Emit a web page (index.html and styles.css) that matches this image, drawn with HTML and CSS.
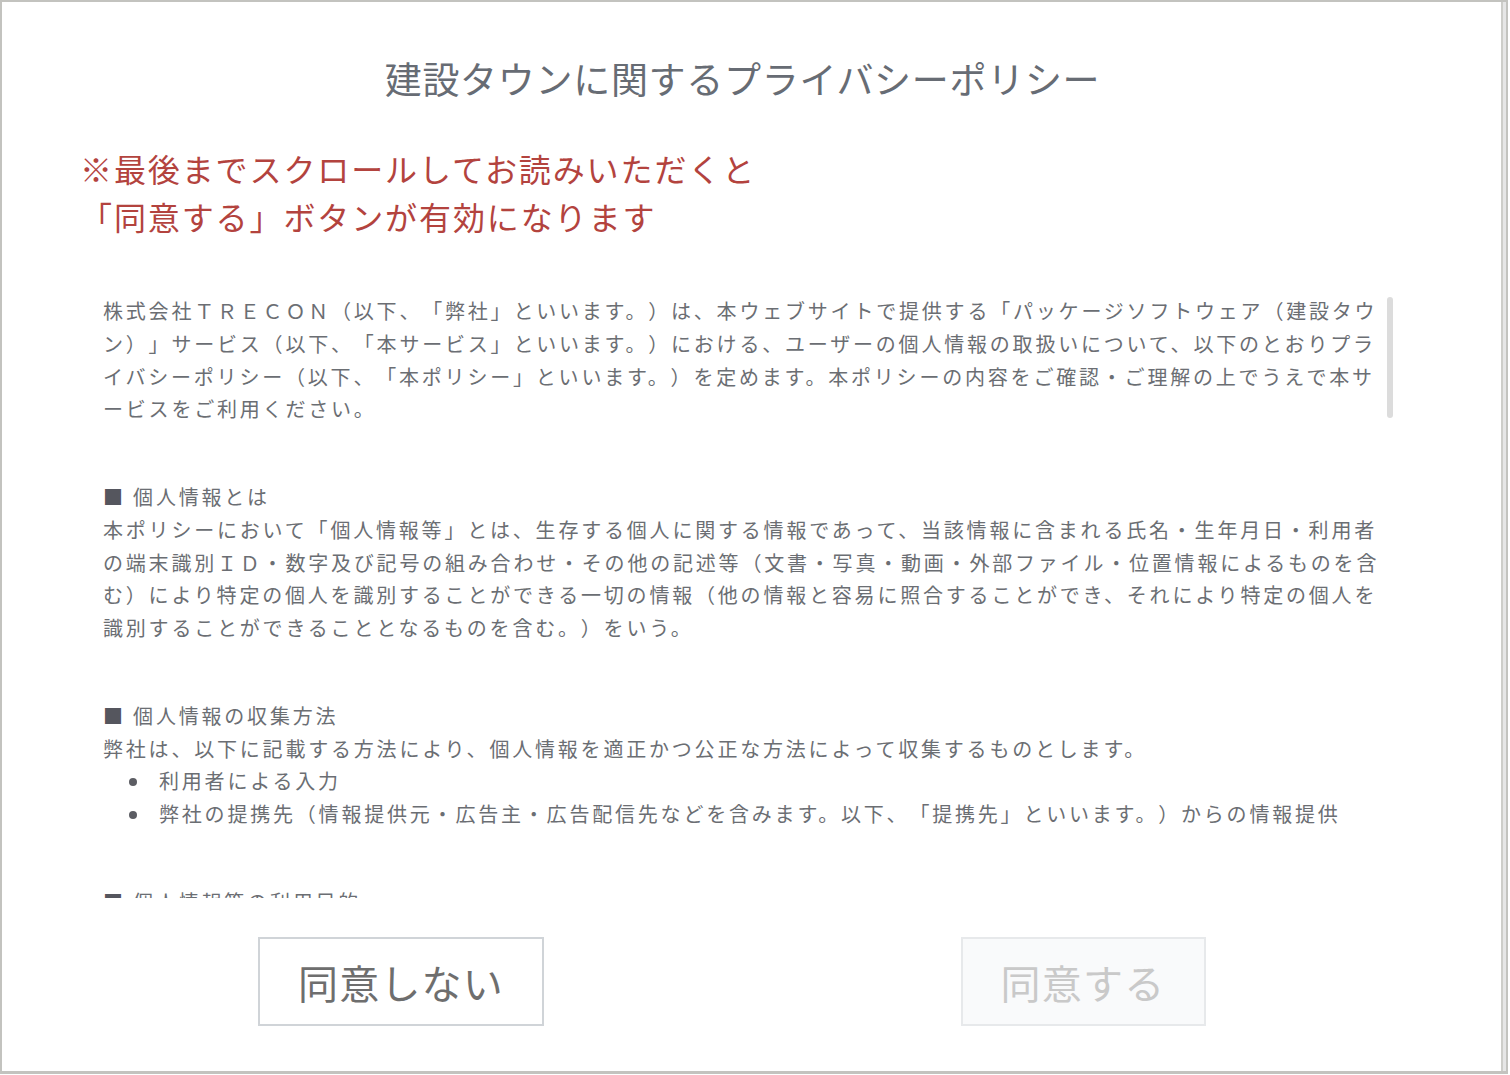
FILE: index.html
```html
<!DOCTYPE html>
<html lang="ja">

<head>
    <meta charset="UTF-8">
    <meta name="viewport" content="width=device-width, initial-scale=1.0">
    <title>建設タウンに関するプライバシーポリシー</title>
    <link rel="stylesheet" href="styles.css">
</head>

<body>

    <div class="window">
        <div class="modal">
            <h1 class="modal-title">建設タウンに関するプライバシーポリシー</h1>
            <p class="notice">※最後までスクロールしてお読みいただくと<br>「同意する」ボタンが有効になります</p>

            <div class="policy-wrap">
                <div class="policy">
                    <div class="policy-section">
                        <p>株式会社ＴＲＥＣＯＮ（以下、「弊社」といいます。）は、本ウェブサイトで提供する「パッケージソフトウェア（建設タウン）」サービス（以下、「本サービス」といいます。）における、ユーザーの個人情報の取扱いについて、以下のとおりプライバシーポリシー（以下、「本ポリシー」といいます。）を定めます。本ポリシーの内容をご確認・ご理解の上でうえで本サービスをご利用ください。</p>
                    </div>

                    <div class="policy-section">
                        <h2><span class="mark">■</span> 個人情報とは</h2>
                        <p>本ポリシーにおいて「個人情報等」とは、生存する個人に関する情報であって、当該情報に含まれる氏名・生年月日・利用者の端末識別ＩＤ・数字及び記号の組み合わせ・その他の記述等（文書・写真・動画・外部ファイル・位置情報によるものを含む）により特定の個人を識別することができる一切の情報（他の情報と容易に照合することができ、それにより特定の個人を識別することができることとなるものを含む。）をいう。</p>
                    </div>

                    <div class="policy-section">
                        <h2><span class="mark">■</span> 個人情報の収集方法</h2>
                        <p>弊社は、以下に記載する方法により、個人情報を適正かつ公正な方法によって収集するものとします。</p>
                        <ul>
                            <li>利用者による入力</li>
                            <li>弊社の提携先（情報提供元・広告主・広告配信先などを含みます。以下、「提携先」といいます。）からの情報提供</li>
                        </ul>
                    </div>

                    <div class="policy-section">
                        <h2><span class="mark">■</span> 個人情報等の利用目的</h2>
                        <p>弊社は、取得した個人情報等を以下の目的のために利用します。</p>
                        <ul>
                            <li>本サービスの提供、運営、維持および改善のため</li>
                            <li>利用者からのお問い合わせに回答するため</li>
                            <li>本サービスに関する新機能、更新情報、キャンペーン等のご案内をするため</li>
                            <li>メンテナンス、重要なお知らせなど必要に応じたご連絡をするため</li>
                            <li>利用規約に違反した利用者や、不正・不当な目的でサービスを利用しようとする利用者の特定をし、ご利用をお断りするため</li>
                            <li>上記の利用目的に付随する目的</li>
                        </ul>
                    </div>

                    <div class="policy-section">
                        <h2><span class="mark">■</span> 利用目的の変更</h2>
                        <p>弊社は、利用目的が変更前と関連性を有すると合理的に認められる場合に限り、個人情報の利用目的を変更するものとします。利用目的の変更を行った場合には、変更後の目的について、弊社所定の方法により、利用者に通知し、または本ウェブサイト上に公表するものとします。</p>
                    </div>

                    <div class="policy-section">
                        <h2><span class="mark">■</span> 個人情報の第三者提供</h2>
                        <p>弊社は、次に掲げる場合を除いて、あらかじめ利用者の同意を得ることなく、第三者に個人情報を提供することはありません。ただし、個人情報保護法その他の法令で認められる場合を除きます。</p>
                        <ul>
                            <li>人の生命、身体または財産の保護のために必要がある場合であって、本人の同意を得ることが困難であるとき</li>
                            <li>公衆衛生の向上または児童の健全な育成の推進のために特に必要がある場合であって、本人の同意を得ることが困難であるとき</li>
                            <li>国の機関もしくは地方公共団体またはその委託を受けた者が法令の定める事務を遂行することに対して協力する必要がある場合</li>
                        </ul>
                    </div>

                    <div class="policy-section">
                        <h2><span class="mark">■</span> 個人情報の開示</h2>
                        <p>弊社は、本人から個人情報の開示を求められたときは、本人に対し、遅滞なくこれを開示します。ただし、開示することにより本人または第三者の生命、身体、財産その他の権利利益を害するおそれがある場合、弊社の業務の適正な実施に著しい支障を及ぼすおそれがある場合、その他法令に違反することとなる場合には、その全部または一部を開示しないこともあり、開示しない決定をした場合には、その旨を遅滞なく通知します。</p>
                    </div>

                    <div class="policy-section">
                        <h2><span class="mark">■</span> 個人情報の訂正および削除</h2>
                        <p>利用者は、弊社の保有する自己の個人情報が誤った情報である場合には、弊社が定める手続きにより、弊社に対して個人情報の訂正、追加または削除を請求することができます。弊社は、利用者から前項の請求を受けてその請求に応じる必要があると判断した場合には、遅滞なく、当該個人情報の訂正等を行うものとします。</p>
                    </div>

                    <div class="policy-section">
                        <h2><span class="mark">■</span> 個人情報の利用停止等</h2>
                        <p>弊社は、本人から、個人情報が、利用目的の範囲を超えて取り扱われているという理由、または不正の手段により取得されたものであるという理由により、その利用の停止または消去を求められた場合には、遅滞なく必要な調査を行います。</p>
                    </div>

                    <div class="policy-section">
                        <h2><span class="mark">■</span> Ｃｏｏｋｉｅ等の利用について</h2>
                        <p>本サービスでは、利便性の向上および利用状況の分析のため、Ｃｏｏｋｉｅ等の技術を使用することがあります。利用者はブラウザの設定によりＣｏｏｋｉｅの受け取りを拒否することができますが、その場合、本サービスの一部の機能がご利用いただけない場合があります。</p>
                    </div>

                    <div class="policy-section">
                        <h2><span class="mark">■</span> 安全管理措置</h2>
                        <p>弊社は、取り扱う個人情報の漏えい、滅失または毀損の防止その他の個人情報の安全管理のために、必要かつ適切な措置を講じます。</p>
                    </div>

                    <div class="policy-section">
                        <h2><span class="mark">■</span> プライバシーポリシーの変更</h2>
                        <p>本ポリシーの内容は、法令その他本ポリシーに別段の定めのある事項を除いて、利用者に通知することなく、変更することができるものとします。弊社が別途定める場合を除いて、変更後のプライバシーポリシーは、本ウェブサイトに掲載したときから効力を生じるものとします。</p>
                    </div>

                    <div class="policy-section">
                        <h2><span class="mark">■</span> お問い合わせ窓口</h2>
                        <p>本ポリシーに関するお問い合わせは、下記の窓口までお願いいたします。</p>
                        <p>株式会社ＴＲＥＣＯＮ　個人情報お問い合わせ窓口</p>
                    </div>

                    <p class="policy-end">以上</p>
                </div>
                <div class="scroll-thumb"></div>
            </div>

            <div class="actions">
                <button class="btn btn-decline">同意しない</button>
                <button class="btn btn-agree" disabled>同意する</button>
            </div>
        </div>
        <div class="rail"></div>
    </div>

</body>

</html>
```

FILE: styles.css
```css
* {
    box-sizing: border-box;
}

body {
    margin: 0;
    background-color: #fff;
    font-family: "Noto Sans CJK JP", "Noto Sans", sans-serif;
    text-spacing-trim: space-all;
}

.window {
    display: flex;
    width: 1508px;
    height: 1074px;
    border: 2px solid #c3c3bf;
    border-bottom-width: 3px;
}

.modal {
    flex: 1;
    padding-right: 18px;
}

.rail {
    width: 5px;
    border-left: 2px solid #cdcdc9;
    background-color: #e6e6e6;
}

.modal-title {
    margin: 49px 0 0;
    font-size: 37px;
    font-weight: normal;
    line-height: 55px;
    letter-spacing: 0.7px;
    text-align: center;
    color: #676c74;
}

.notice {
    margin: 38px 0 0 78px;
    font-size: 32px;
    line-height: 48px;
    letter-spacing: 1.9px;
    color: #b3433e;
}

/* scrollable policy text */
.policy-wrap {
    position: relative;
    width: 1313px;
    margin: 55px 0 0 78px;
}

.policy {
    height: 603px;
    padding: 0 6px 0 23px;
    overflow-y: auto;
    scrollbar-width: none;
    font-size: 20px;
    line-height: 32.75px;
    letter-spacing: 2.8px;
    line-break: loose;
    color: #6b6e73;
}

.scroll-thumb {
    position: absolute;
    top: 2px;
    right: 0;
    width: 6px;
    height: 121px;
    border-radius: 3px;
    background-color: #dcdcdc;
}

.policy-section {
    margin-bottom: 55px;
}

.policy h2 {
    margin: 0;
    font-size: inherit;
    font-weight: normal;
    line-height: inherit;
}

.policy .mark {
    color: #55565e;
}

.policy p {
    margin: 0;
}

.policy ul {
    margin: 0;
    padding-left: 56px;
    list-style: none;
}

.policy li {
    position: relative;
}

.policy li::before {
    content: "";
    position: absolute;
    top: 13px;
    left: -30px;
    width: 8px;
    height: 8px;
    border-radius: 50%;
    background-color: #5c5d63;
}

.policy .policy-end {
    padding-bottom: 40px;
}

.actions {
    display: grid;
    grid-template-columns: 682px 682px;
    justify-items: center;
    margin: 39px 0 0 58px;
}

.btn {
    height: 89px;
    padding: 0;
    font-family: inherit;
    font-size: 40px;
    line-height: 1;
    letter-spacing: 1.2px;
    color: #6e6e6e;
    background-color: #fff;
    border: 2px solid #d0d4d8;
    cursor: pointer;
}

.btn-decline {
    width: 286px;
}

.btn-agree {
    width: 245px;
    color: #c9c9c9;
    background-color: #f9fafb;
    border-color: #e7e9eb;
    cursor: default;
}
```
